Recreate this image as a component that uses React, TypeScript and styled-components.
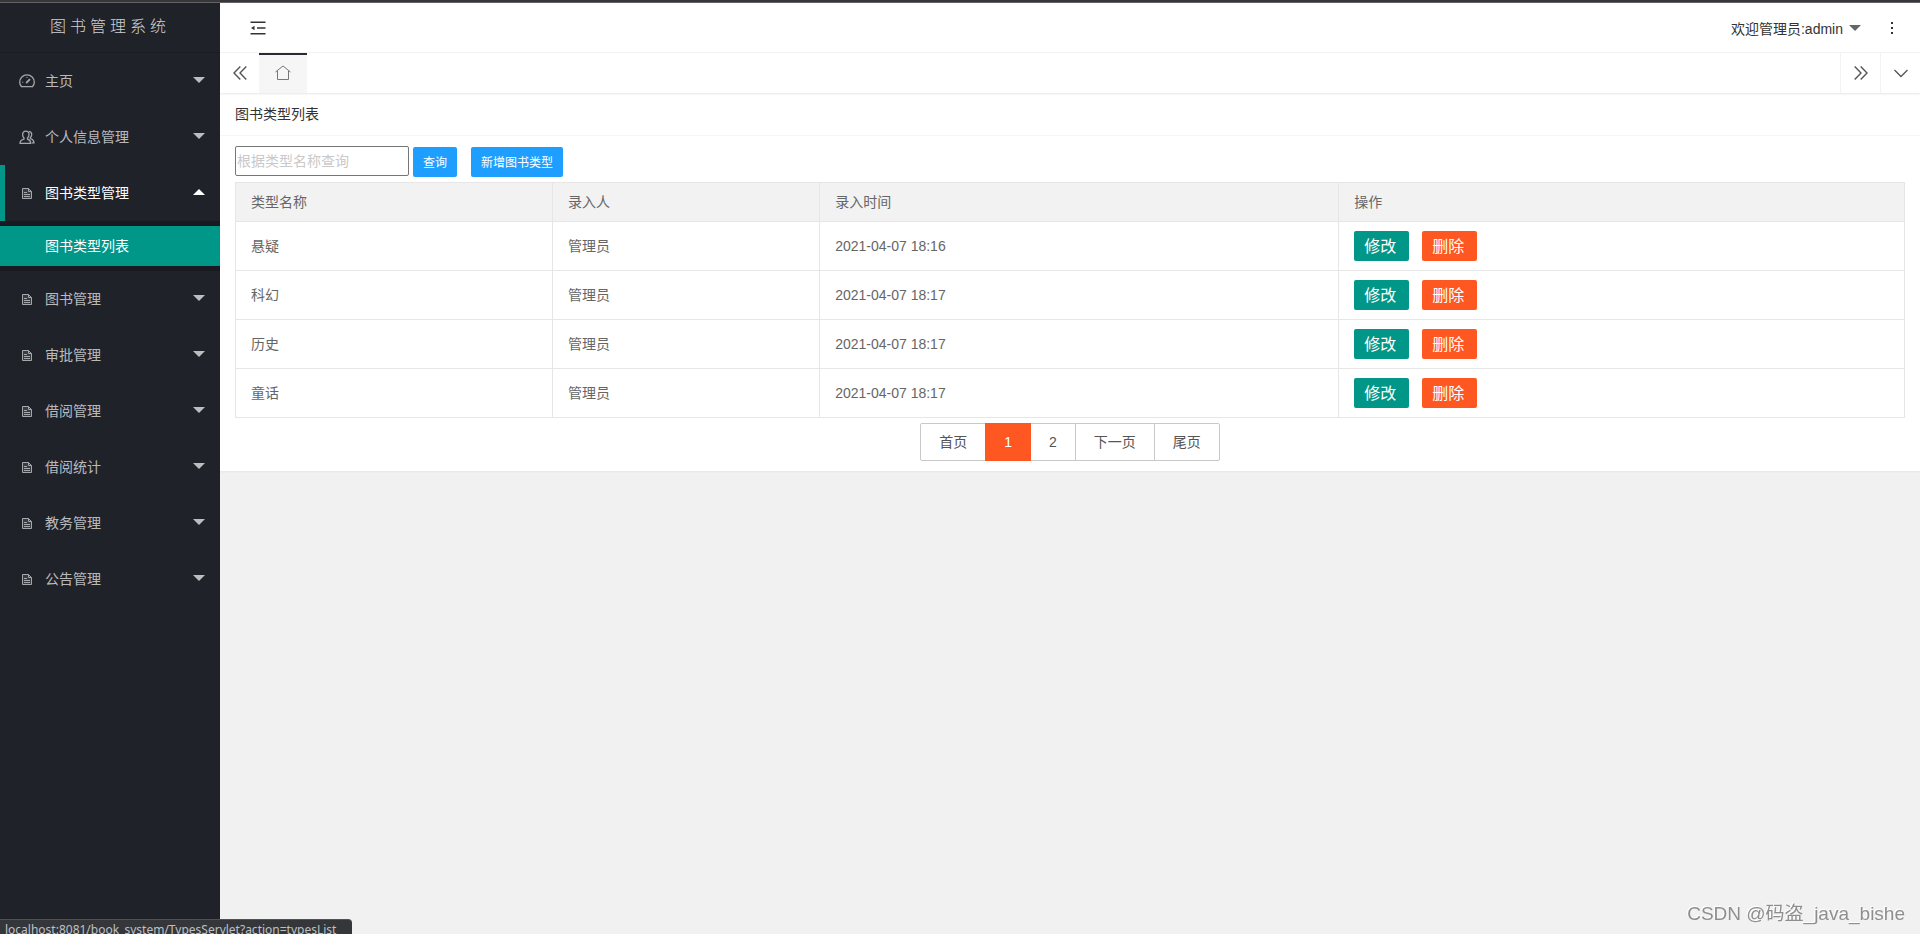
import React, { useState } from "react";
import styled, { createGlobalStyle, css } from "styled-components";

const sans = `"Liberation Sans", "Noto Sans CJK SC", sans-serif`;

const GlobalStyle = createGlobalStyle`
  *, *::before, *::after { box-sizing: border-box; }
  html, body, #root { height: 100%; }
  body {
    margin: 0;
    background: #f1f1f1;
    color: #333;
    font: 14px/24px ${sans};
    overflow: hidden;
  }
  a { color: inherit; text-decoration: none; }
  button, input { font-family: inherit; }
  button { cursor: pointer; }
  ul { list-style: none; margin: 0; padding: 0; }
`;

const Page = styled.div`
  display: flex;
  flex-direction: column;
  min-height: 100vh;
`;

const WindowEdge = styled.div`
  height: 3px;
  background: #37373b;
  border-bottom: 1px solid #636365;
`;

const Shell = styled.div`
  display: flex;
  flex: 1;
`;

const Sidebar = styled.aside`
  flex: 0 0 220px;
  background: #20222a;
  color: rgba(255, 255, 255, 0.7);
`;

const Brand = styled.h1`
  margin: 0;
  height: 50px;
  border-bottom: 1px solid #1b1d24;
  font-size: 16px;
  font-weight: 300;
  line-height: 48px;
  letter-spacing: 4px;
  text-align: center;
  color: rgba(255, 255, 255, 0.8);
`;

const MenuButton = styled.button<{ $open: boolean }>`
  display: flex;
  align-items: center;
  width: 100%;
  height: 56px;
  padding: 0 15px 2px 14px;
  border: 0;
  border-left: 5px solid ${(p) => (p.$open ? "#009688" : "transparent")};
  background: transparent;
  color: ${(p) => (p.$open ? "#fff" : "rgba(255, 255, 255, 0.7)")};
  font-size: 14px;
  text-align: left;
`;

const MenuIcon = styled.span`
  display: flex;
  justify-content: center;
  width: 16px;
  margin-right: 10px;
  padding-top: 2px;
  color: #a6a7aa;
`;

const Caret = styled.span<{ $up?: boolean }>`
  margin-left: auto;
  border: 6px solid transparent;
  ${(p) =>
    p.$up
      ? css`
          border-top-width: 0;
          border-bottom-color: #fff;
        `
      : css`
          border-bottom-width: 0;
          border-top-color: currentColor;
        `}
`;

const SubMenu = styled.ul`
  && {
    padding: 5px 0;
  }
  background: #181a20;
`;

const SubLink = styled.a`
  display: block;
  padding-left: 45px;
  background: #009688;
  color: #fff;
  line-height: 40px;
`;

const Main = styled.main`
  flex: 1;
  min-width: 0;
`;

const Header = styled.header`
  display: flex;
  align-items: center;
  height: 50px;
  padding: 0 26px 0 30px;
  border-bottom: 1px solid #f3f3f3;
  background: #fff;
`;

const IconButton = styled.button`
  display: inline-flex;
  align-items: center;
  justify-content: center;
  padding: 0;
  border: 0;
  background: none;
  color: #333;
`;

const UserMenu = styled.button`
  display: flex;
  align-items: center;
  gap: 6px;
  margin-left: auto;
  margin-right: 29px;
  padding: 0;
  border: 0;
  background: none;
  color: #333;
  font-size: 14px;
`;

const UserCaret = styled.span`
  border: 6px solid transparent;
  border-bottom-width: 0;
  border-top-color: #666;
`;

const TabBar = styled.nav`
  display: flex;
  height: 40px;
  background: #fff;
  box-shadow: 0 1px 2px rgba(0, 0, 0, 0.1);
  position: relative;
`;

const TabControl = styled(IconButton)<{ $divided?: boolean }>`
  width: 40px;
  color: #555;
  border-left: ${(p) => (p.$divided ? "1px solid #f3f3f3" : "0")};
`;

const HomeTab = styled.a`
  display: flex;
  align-items: center;
  justify-content: center;
  width: 48px;
  margin-left: -1px;
  margin-right: auto;
  padding-bottom: 2px;
  border-top: 2px solid #292b34;
  background: #f6f6f6;
  color: #777;
`;

const Card = styled.section`
  background: #fff;
  box-shadow: 0 1px 2px rgba(0, 0, 0, 0.05);
`;

const CardTitle = styled.h2`
  margin: 0;
  padding: 0 15px;
  border-bottom: 1px solid #f6f6f6;
  font-size: 14px;
  font-weight: 400;
  line-height: 42px;
`;

const CardBody = styled.div`
  padding: 10px 15px;
`;

const SearchForm = styled.form`
  display: flex;
  align-items: flex-end;
  height: 31px;
  margin-bottom: 5px;
`;

const SearchInput = styled.input`
  align-self: flex-start;
  width: 174px;
  height: 30px;
  margin-right: 4px;
  padding: 1px;
  border: 1px solid #767676;
  border-radius: 2px;
  font-size: 14px;
  &::placeholder { color: #c9c9c9; }
`;

const BlueButton = styled.button`
  height: 30px;
  margin-right: 14px;
  padding: 0 10px 2px;
  border: 0;
  border-radius: 2px;
  background: #1e9fff;
  color: #fff;
  font-size: 12px;
  white-space: nowrap;
`;

const DataTable = styled.table`
  width: 100%;
  table-layout: fixed;
  border-collapse: collapse;
  color: #666;
  th, td {
    border: 1px solid #e6e6e6;
    padding: 0 15px;
    font-weight: 400;
    text-align: left;
  }
  th { height: 39px; background: #f2f2f2; }
  td { height: 49px; }
`;

const Actions = styled.div`
  display: flex;
  gap: 13px;
`;

const RowButton = styled.button<{ $danger?: boolean }>`
  width: 55px;
  height: 30px;
  padding: 0 13px 2px 10px;
  border: 0;
  border-radius: 2px;
  background: ${(p) => (p.$danger ? "#ff5722" : "#009688")};
  color: #fff;
  font-size: 16px;
  white-space: nowrap;
`;

const Pager = styled.nav`
  display: flex;
  justify-content: center;
  margin-top: 5px;
`;

const PageLink = styled.a<{ $current?: boolean }>`
  height: 38px;
  padding: 0 18px;
  border: 1px solid ${(p) => (p.$current ? "#ff5722" : "#c9c9c9")};
  background: ${(p) => (p.$current ? "#ff5722" : "#fff")};
  color: ${(p) => (p.$current ? "#fff" : "#555")};
  line-height: 36px;
  position: relative;
  z-index: ${(p) => (p.$current ? 1 : 0)};
  & + & { margin-left: -1px; }
  &:first-child { border-radius: 2px 0 0 2px; }
  &:last-child { border-radius: 0 2px 2px 0; }
`;

const StatusBubble = styled.div`
  position: fixed;
  left: 0;
  bottom: 0;
  width: 352px;
  height: 15px;
  padding-left: 5px;
  overflow: hidden;
  border-top: 1px solid #505155;
  border-radius: 0 4px 0 0;
  background: #35363a;
  color: #bdc1c6;
  font: 12px/20px "Noto Sans", sans-serif;
  white-space: nowrap;
`;

const Watermark = styled.div`
  position: fixed;
  right: 15px;
  bottom: 8px;
  color: #8e8e8e;
  text-shadow: -1px -1px 0 #fff;
  font-size: 19px;
`;

const stroke = { fill: "none", stroke: "currentColor" } as const;

const GaugeIcon = () => (
  <svg width="16" height="14" viewBox="0 0 16 14" {...stroke} strokeWidth="1.3">
    <path d="M2.6 12.7C1.400 11.500.7 9.900.7 8.200a7.300 7.300 0 0 1 14.600 0c0 1.700-.7 3.300-1.900 4.500Z" />
    <path d="M7.200 9 11 5.200" strokeWidth="1.8" />
    <path d="M3.200 8.200h1M8 3v1" strokeWidth="1" />
  </svg>
);

const UsersIcon = () => (
  <svg width="16" height="15" viewBox="0 0 16 15" {...stroke} strokeWidth="1.3">
    <path d="M6.800 1.100c2 0 3.200 1.500 3.200 3.400 0 1.500-.6 2.700-1.500 3.400v1.200c1.800.6 3.300 1.400 3.300 4.300H1c0-2.900 1.500-3.700 4-4.300V7.900C4.100 7.200 3.600 6 3.600 4.500c0-1.900 1.200-3.400 3.200-3.400Z" />
    <path d="M10 1.300c1.800.2 2.700 1.500 2.700 3.300 0 1.300-.5 2.300-1.300 3v1c2.100.7 3.600 1.600 3.600 4.200h-2" />
  </svg>
);

const FileIcon = () => (
  <svg width="10" height="11" viewBox="0 0 10 11" {...stroke} strokeWidth="1">
    <path d="M.5.5H6.500L9.500 3.500V10.500H.5Z" fill="currentColor" fillOpacity="0.2" />
    <path d="M6.500.5V3.500H9.500M2 4.500H5M2 6.500H8M2 8.500H8" />
  </svg>
);

const ShrinkIcon = () => (
  <svg width="16" height="14" viewBox="0 0 16 14" {...stroke} strokeWidth="1.5">
    <path d="M.5 1.250H15.500M7 7H15.500M.5 12.750H15.500" />
    <path d="M1 7 4.500 4.700V9.300Z" fill="currentColor" stroke="none" />
  </svg>
);

const DoubleChevron = ({ right }: { right?: boolean }) => (
  <svg width="14" height="14" viewBox="0 0 14 14" {...stroke} strokeWidth="1.4">
    <path d={right ? "M.7.5 7 7 .7 13.500M6.700.5 13 7 6.700 13.500" : "M7.300.5 1 7 7.300 13.500M13.300.5 7 7 13.300 13.500"} />
  </svg>
);

const ChevronDown = () => (
  <svg width="14" height="9" viewBox="0 0 14 9" {...stroke} strokeWidth="1.3">
    <path d="M.5 1 7 7.500 13.500 1" />
  </svg>
);

const HomeIcon = () => (
  <svg width="16" height="16" viewBox="0 0 16 16" {...stroke} strokeWidth="1">
    <path d="M.5 7 8 1 15.500 7M2.500 6V14.500H13.500V6" />
  </svg>
);

const DotsIcon = () => (
  <svg width="4" height="14" viewBox="0 0 4 14" fill="currentColor">
    <path d="M1 1h2v2H1ZM1 6h2v2H1ZM1 11h2v2H1Z" />
  </svg>
);

const menu = [
  { label: "主页", icon: <GaugeIcon /> },
  { label: "个人信息管理", icon: <UsersIcon /> },
  { label: "图书类型管理", icon: <FileIcon />, children: ["图书类型列表"] },
  { label: "图书管理", icon: <FileIcon /> },
  { label: "审批管理", icon: <FileIcon /> },
  { label: "借阅管理", icon: <FileIcon /> },
  { label: "借阅统计", icon: <FileIcon /> },
  { label: "教务管理", icon: <FileIcon /> },
  { label: "公告管理", icon: <FileIcon /> },
];

const rows = [
  ["悬疑", "管理员", "2021-04-07 18:16"],
  ["科幻", "管理员", "2021-04-07 18:17"],
  ["历史", "管理员", "2021-04-07 18:17"],
  ["童话", "管理员", "2021-04-07 18:17"],
];

const pages = ["首页", "1", "2", "下一页", "尾页"];

export default function App() {
  const [opened, setOpened] = useState("图书类型管理");
  return (
    <Page>
      <GlobalStyle />
      <WindowEdge />
      <Shell>
        <Sidebar>
          <Brand>图书管理系统</Brand>
          <ul>
            {menu.map(({ label, icon, children }) => {
              const open = opened === label;
              return (
                <li key={label}>
                  <MenuButton $open={open} aria-expanded={open} onClick={() => setOpened(open ? "" : label)}>
                    <MenuIcon>{icon}</MenuIcon>
                    {label}
                    <Caret $up={open} />
                  </MenuButton>
                  {open && children && (
                    <SubMenu>
                      {children.map((c) => (
                        <li key={c}>
                          <SubLink href="#types">{c}</SubLink>
                        </li>
                      ))}
                    </SubMenu>
                  )}
                </li>
              );
            })}
          </ul>
        </Sidebar>
        <Main>
          <Header>
            <IconButton aria-label="侧边伸缩"><ShrinkIcon /></IconButton>
            <UserMenu>
              欢迎管理员:admin
              <UserCaret />
            </UserMenu>
            <IconButton aria-label="更多"><DotsIcon /></IconButton>
          </Header>
          <TabBar>
            <TabControl aria-label="向左"><DoubleChevron /></TabControl>
            <HomeTab href="#home" aria-label="主页"><HomeIcon /></HomeTab>
            <TabControl $divided aria-label="向右"><DoubleChevron right /></TabControl>
            <TabControl $divided aria-label="标签操作"><ChevronDown /></TabControl>
          </TabBar>
          <Card>
            <CardTitle>图书类型列表</CardTitle>
            <CardBody>
              <SearchForm onSubmit={(e) => e.preventDefault()}>
                <SearchInput type="text" aria-label="类型名称" placeholder="根据类型名称查询" />
                <BlueButton type="submit">查询</BlueButton>
                <BlueButton type="button">新增图书类型</BlueButton>
              </SearchForm>
              <DataTable>
                <colgroup>
                  <col style={{ width: "19%" }} />
                  <col style={{ width: "16%" }} />
                  <col style={{ width: "31.1%" }} />
                  <col />
                </colgroup>
                <thead>
                  <tr>
                    <th scope="col">类型名称</th>
                    <th scope="col">录入人</th>
                    <th scope="col">录入时间</th>
                    <th scope="col">操作</th>
                  </tr>
                </thead>
                <tbody>
                  {rows.map((r) => (
                    <tr key={r[0]}>
                      {r.map((v) => <td key={v}>{v}</td>)}
                      <td>
                        <Actions>
                          <RowButton>修改</RowButton>
                          <RowButton $danger>删除</RowButton>
                        </Actions>
                      </td>
                    </tr>
                  ))}
                </tbody>
              </DataTable>
              <Pager aria-label="分页">
                {pages.map((p) => (
                  <PageLink key={p} href="#page" $current={p === "1"}>{p}</PageLink>
                ))}
              </Pager>
            </CardBody>
          </Card>
        </Main>
      </Shell>
      <StatusBubble>localhost:8081/book_system/TypesServlet?action=typesList</StatusBubble>
      <Watermark>CSDN @码盗_java_bishe</Watermark>
    </Page>
  );
}
